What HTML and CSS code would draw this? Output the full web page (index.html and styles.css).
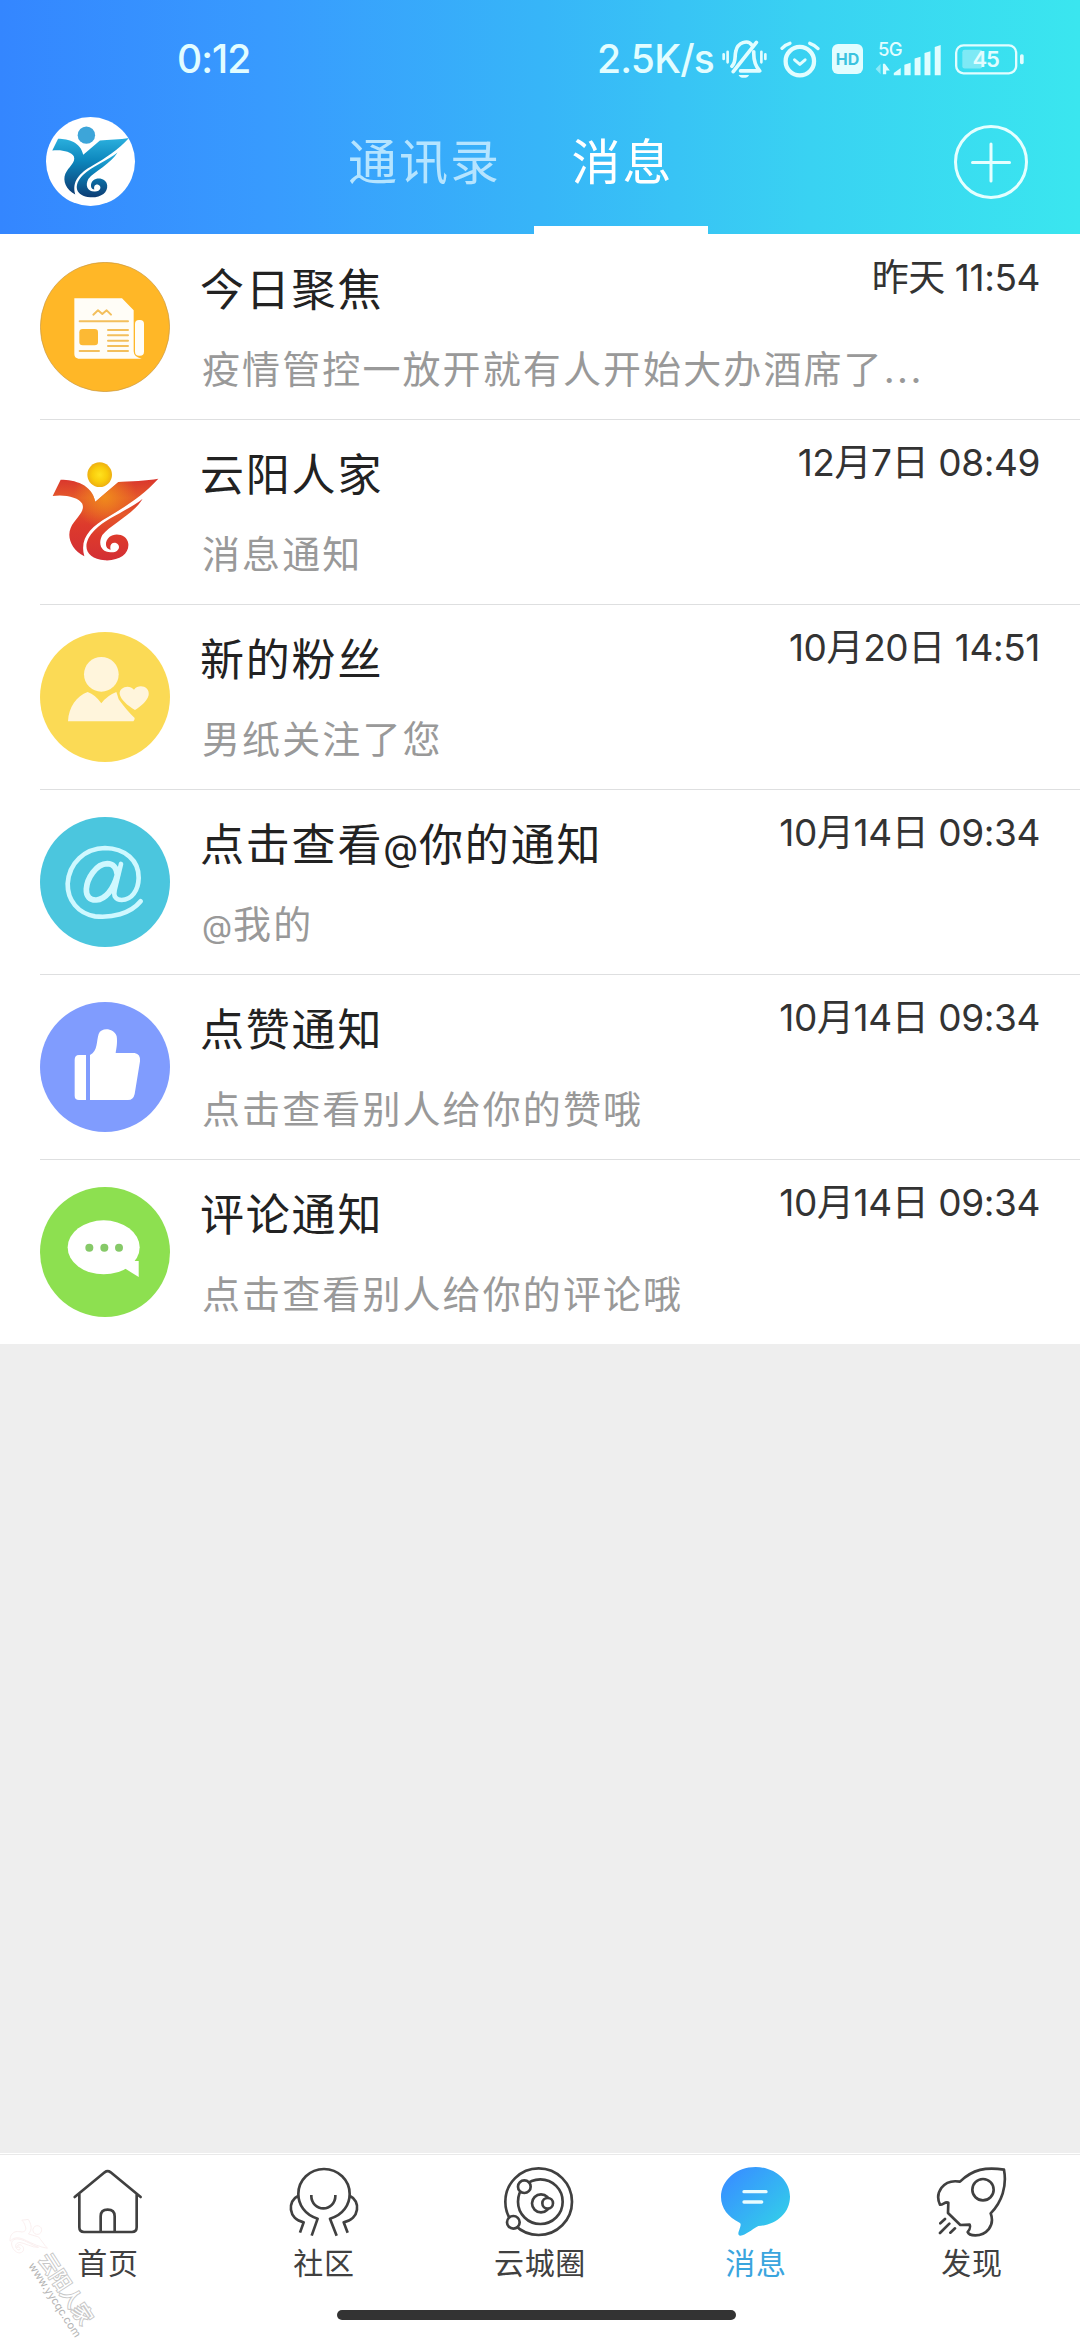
FILE: index.html
```html
<!DOCTYPE html>
<html lang="zh-CN">
<head>
<meta charset="utf-8">
<title>消息</title>
<link rel="stylesheet" href="styles.css">
</head>
<body>
<svg class="defs" width="0" height="0" aria-hidden="true">
  <defs>
    <linearGradient id="blue" x1="0" y1="0" x2="0" y2="1"><stop offset="0" stop-color="#2bb0de"/><stop offset=".4" stop-color="#0d87bd"/><stop offset="1" stop-color="#0d3c73"/></linearGradient>
    <linearGradient id="red" x1="0" y1="0" x2="0" y2="1"><stop offset="0" stop-color="#d9352d"/><stop offset=".25" stop-color="#e5592a"/><stop offset=".6" stop-color="#dd3a2c"/><stop offset="1" stop-color="#d32f35"/></linearGradient>
    <radialGradient id="sun"><stop offset="0" stop-color="#ffe21f"/><stop offset=".6" stop-color="#f9cc0c"/><stop offset="1" stop-color="#eeb012"/></radialGradient>
    <radialGradient id="warm" gradientUnits="userSpaceOnUse" cx="195" cy="150" r="95"><stop offset="0" stop-color="#f08a1c"/><stop offset="1" stop-color="#f08a1c" stop-opacity="0"/></radialGradient>
    <linearGradient id="chat" x1="0" y1="0" x2="1" y2="1"><stop offset=".15" stop-color="#3794ff"/><stop offset=".85" stop-color="#33ccea"/></linearGradient>
    <path id="wing" d="M62 98C105 98 155 112 166 164L235 105C270 103 320 101 355 95C312 143 255 180 205 209C150 240 118 275 133 328C95 309 80 272 92 243C104 214 137 196 127 170C117 150 70 141 38 147Z"/>
    <path id="curl" d="M308 155C270 187 200 213 165 248C121 292 135 335 195 340C240 342 268 320 265 290C262 262 225 255 208 270C192 284 196 308 212 308C208 295 215 285 228 288C244 294 238 316 215 316C185 318 172 292 187 264C212 233 280 202 308 155Z"/>
  </defs>
</svg>

<div class="screen">
  <header class="top">
    <div class="status">
      <span class="clock">0:12</span>
      <div class="status-right">
        <span class="speed">2.5K/s</span>
        <svg class="s-bell" viewBox="62 30 136 120" fill="none" stroke="#e2fdff" stroke-width="11" stroke-linecap="round">
          <path d="M92 112C106 98 99 82 104 66C109 40 140 30 152 48M96 128L166 40M158 68C157 92 160 108 176 126H118" stroke-linejoin="round"/>
          <path d="M67 76V90M79 68V100M181 68V100M193 76V90" stroke-width="8"/>
          <path d="M112 138A17 13 0 0 0 144 138Z" fill="#e2fdff" stroke="none"/>
        </svg>
        <svg class="s-alarm" viewBox="238 30 121 112" fill="none" stroke="#e2fdff" stroke-linecap="round" stroke-linejoin="round">
          <circle cx="298" cy="91" r="43" stroke-width="13"/>
          <path d="M282 87L298 101L314 87" stroke-width="9"/>
          <path d="M244 52Q254 41 268 37M328 37Q343 42 353 53" stroke-width="10"/>
        </svg>
        <span class="hd">HD</span>
        <svg class="s-signal" viewBox="522 28 204 109">
          <text x="533" y="75" class="sig-text">5G</text>
          <g fill="#dffdff">
            <path d="M541 100V132L526 116Z" opacity=".5"/><path d="M548 132V100H554L569 120H558V132Z"/>
            <path d="M581 135V128L602 113V135ZM613 135V103L632 97V135ZM644 135V84L662 79V135ZM674 135V67L692 62V135ZM705 135V49L723 43V135Z"/>
          </g>
        </svg>
        <svg class="s-battery" viewBox="765 42 207 92">
          <rect x="787" y="59" width="60" height="56" rx="7" fill="#fff" opacity=".35"/>
          <rect x="768.500" y="45.500" width="180" height="84" rx="22" fill="none" stroke="#e2fdff" stroke-width="7"/>
          <rect x="960" y="72" width="11" height="30" rx="5" fill="#e2fdff"/>
          <text x="857" y="110" text-anchor="middle" class="bat-text">45</text>
        </svg>
      </div>
    </div>
    <div class="bar">
      <div class="avatar">
        <svg viewBox="12 8 368 368"><circle cx="179" cy="83" r="36" fill="#3da5d9"/><use href="#wing" fill="url(#blue)"/><use href="#curl" fill="url(#blue)"/></svg>
      </div>
      <nav class="tabs">
        <a class="tab">通讯录</a>
        <a class="tab tab-on">消息</a>
      </nav>
      <svg class="plus" viewBox="0 0 74 74" fill="none" stroke="#e4ffff"><circle cx="37" cy="37" r="35.500" stroke-width="3"/><path d="M18.500 37.500H55.500M37 19V56" stroke-width="3" stroke-linecap="round"/></svg>
    </div>
  </header>

  <main class="list">
    <section class="row">
      <svg class="icon" viewBox="0 0 390 390">
        <circle cx="195" cy="195" r="194" fill="#ffb727" stroke="#c79845" stroke-width="2"/>
        <path d="M103 109H246L281 145V268Q281 285 305 290H115Q103 288 103 276Z" fill="#fffdf7"/>
        <rect x="285" y="174" width="27" height="107" rx="12" fill="#fffdf7"/>
        <g fill="none" stroke="#f3bf5c" stroke-width="6" stroke-linecap="round" stroke-linejoin="round">
          <path d="M160 158L174 145L187 156L200 145L213 158M119 178H264M204 204H264M204 220H264M204 236H264M204 252H264M204 267H264M119 267H177"/>
        </g>
        <rect x="118" y="201" width="56" height="49" rx="10" fill="#fcb934"/>
      </svg>
      <div class="body">
        <div class="line"><h2 class="title">今日聚焦</h2><time class="time">昨天 11:54</time></div>
        <p class="sub">疫情管控一放开就有人开始大办酒席了<span class="dots">...</span></p>
      </div>
    </section>
    <section class="row">
      <svg class="icon" viewBox="0 0 390 390"><circle cx="179" cy="83" r="37" fill="url(#sun)"/><use href="#wing" fill="url(#red)"/><use href="#wing" fill="url(#warm)"/><use href="#curl" fill="url(#red)"/></svg>
      <div class="body">
        <div class="line"><h2 class="title">云阳人家</h2><time class="time">12月7日 08:49</time></div>
        <p class="sub">消息通知</p>
      </div>
    </section>
    <section class="row">
      <svg class="icon" viewBox="0 0 390 390">
        <circle cx="195" cy="195" r="195" fill="#fbda55"/>
        <g fill="#fff5dc">
          <circle cx="184" cy="127" r="52"/>
          <path d="M84 268C86 225 110 192 143 180Q166 188 184 214Q202 190 229 180Q232 188 236 202Q262 238 284 258Q284 266 280 268Z"/>
          <path d="M285 234C262 220 242 203 239 186C237 165 268 156 282 173C297 154 330 164 326 189C322 207 304 222 285 234Z"/>
        </g>
      </svg>
      <div class="body">
        <div class="line"><h2 class="title">新的粉丝</h2><time class="time">10月20日 14:51</time></div>
        <p class="sub">男纸关注了您</p>
      </div>
    </section>
    <section class="row">
      <svg class="icon" viewBox="0 0 390 390">
        <circle cx="195" cy="195" r="195" fill="#4bc6de"/>
        <g fill="none" stroke="#cff8ff" stroke-linecap="round" stroke-linejoin="round">
          <path d="M302 253C270 292 214 303 165 298C114 289 82 250 83 200C87 137 135 94 195 93C255 94 297 130 296 183C295 221 275 248 245 249C226 249 220 236 224 219L243 141" stroke-width="14"/>
          <path d="M232 174C230 151 218 140 202 140C168 141 141 184 139 216C138 239 150 250 169 249C196 247 221 217 232 174Z" stroke-width="17"/>
        </g>
      </svg>
      <div class="body">
        <div class="line"><h2 class="title">点击查看<span class="at">@</span>你的通知</h2><time class="time">10月14日 09:34</time></div>
        <p class="sub"><span class="at">@</span>我的</p>
      </div>
    </section>
    <section class="row">
      <svg class="icon" viewBox="0 0 390 390">
        <circle cx="195" cy="195" r="195" fill="#809cfe"/>
        <path d="M117 159H138V294H117Q104 294 104 281V174Q104 159 117 159ZM150 159C174 148 169 116 176 96C184 75 222 78 230 103C233 122 229 141 227 153H284Q302 156 300 178L284 276Q280 294 264 294H150Z" fill="#fff"/>
      </svg>
      <div class="body">
        <div class="line"><h2 class="title">点赞通知</h2><time class="time">10月14日 09:34</time></div>
        <p class="sub">点击查看别人给你的赞哦</p>
      </div>
    </section>
    <section class="row">
      <svg class="icon" viewBox="0 0 390 390">
        <circle cx="195" cy="195" r="195" fill="#8de050"/>
        <ellipse cx="191" cy="181" rx="108" ry="81" fill="#fff"/>
        <path d="M254 244L296 270V222H278Z" fill="#fff"/>
        <g fill="#86c968"><circle cx="148" cy="182" r="12"/><circle cx="193" cy="182" r="12"/><circle cx="237" cy="182" r="12"/></g>
      </svg>
      <div class="body">
        <div class="line"><h2 class="title">评论通知</h2><time class="time">10月14日 09:34</time></div>
        <p class="sub">点击查看别人给你的评论哦</p>
      </div>
    </section>
  </main>

  <footer class="bottom">
    <nav class="nav">
      <a class="item">
        <svg class="nav-icon" viewBox="0 0 216 216"><path d="M22 84V184Q22 198 36 198H180Q194 198 194 184V84M8 93L98 19Q107 12 116 19L206 93M86 198V151Q86 131 107 131Q128 131 128 151V198"/></svg>
        <span>首页</span>
      </a>
      <a class="item">
        <svg class="nav-icon" viewBox="0 0 216 216"><path d="M71 209L89 158C50 147 31 115 31 84A77 75 0 0 1 185 84C185 115 166 147 126 158L146 209M70 87V91A36 36 0 0 0 142 91V87M30 90C-2 104 0 160 47 169L36 200M186 90C218 104 216 160 167 169L179 200" stroke-linecap="butt"/></svg>
        <span>社区</span>
      </a>
      <a class="item">
        <svg class="nav-icon" viewBox="0 0 216 216"><circle cx="104" cy="107" r="100"/><circle cx="109" cy="107" r="67"/><circle cx="111" cy="112" r="27"/><g fill="#fff"><circle cx="131" cy="112" r="16"/><circle cx="61" cy="62" r="19"/><circle cx="28" cy="169" r="19"/></g></svg>
        <span>云城圈</span>
      </a>
      <a class="item item-on">
        <svg class="nav-icon" viewBox="0 0 216 216"><path d="M107 3C164 3 210 43 210 92C210 142 166 178 115 180C93 192 78 207 61 209C52 207 55 199 58 191C61 183 64 175 60 171C24 153 3 126 3 93C3 43 49 3 107 3Z" fill="url(#chat)" stroke="none"/><path d="M72 77H138M72 108H125" stroke="#e9fcff" stroke-width="10"/></svg>
        <span>消息</span>
      </a>
      <a class="item">
        <svg class="nav-icon" viewBox="0 0 216 216"><path d="M72 47C110 10 150 2 204 11C213 60 198 108 164 142C178 180 150 208 118 208C106 208 97 204 95 198C103 188 104 184 101 176L73 177L36 141L37 110C28 105 20 118 12 116C-4 82 20 38 72 47ZM27 159L13 172M40 173L12 201M57 187L43 200"/><circle cx="141" cy="71" r="32"/></svg>
        <span>发现</span>
      </a>
    </nav>
    <div class="home-bar"></div>
    <div class="mark">
      <svg class="mark-logo" viewBox="0 0 390 390" fill="none" stroke="#f9eeee" stroke-width="7"><circle cx="179" cy="83" r="37"/><use href="#wing"/><use href="#curl"/></svg>
      <div class="mark-text"><span class="mark-name">云阳人家</span><span class="mark-url">www.yycqc.com</span></div>
    </div>
  </footer>
</div>
</body>
</html>
```

FILE: styles.css
```css
* { box-sizing: border-box; }

body {
  margin: 0;
  background: #eee;
  font-family: Inter, "Noto Sans CJK SC", sans-serif;
}

h2, p { margin: 0; font-weight: 400; }

.defs { position: absolute; }

.screen {
  display: flex;
  flex-direction: column;
  width: 1080px;
  height: 2340px;
  overflow: hidden;
  background: #eee;
}

/* header */
.top {
  display: flex;
  flex-direction: column;
  height: 234px;
  background: linear-gradient(90deg, #3486ff 0%, #389bfe 25%, #37b5f8 50%, #39d2f2 75%, #3ae6ef 100%);
}

.status {
  display: flex;
  justify-content: space-between;
  align-items: center;
  height: 90px;
  padding: 28px 56px 0 177px;
  color: #e2fdff;
}

.clock, .speed { font-size: 39px; font-weight: 500; line-height: 62px; }
.clock { letter-spacing: -1px; }
.speed { letter-spacing: -0.8px; }
.status-right { display: flex; align-items: center; }
.s-bell { width: 45px; height: 40px; margin-left: 8px; }
.s-alarm { width: 40px; height: 37px; margin-left: 13px; }

.hd {
  width: 31px;
  height: 30px;
  margin-left: 12px;
  border-radius: 6px;
  background: #e2fdff;
  color: #3bc3df;
  font-size: 16px;
  font-weight: 700;
  line-height: 30px;
  text-align: center;
}

.s-signal { width: 68px; height: 36px; margin-left: 11px; margin-bottom: 3px; overflow: visible; }
.s-battery { width: 69px; height: 31px; margin-left: 13px; }
.sig-text { fill: #e2fdff; font-size: 56px; font-weight: 500; letter-spacing: -2px; }
.bat-text { fill: #e2fdff; font-size: 66px; font-weight: 600; letter-spacing: -3px; }

.bar {
  display: flex;
  height: 144px;
  padding: 0 52px 0 46px;
}

.avatar {
  width: 89px;
  height: 89px;
  margin-top: 27px;
  border-radius: 50%;
  background: #fff;
  overflow: hidden;
}

.avatar svg { display: block; width: 89px; height: 89px; }

.tabs { display: flex; margin-left: 177px; }

.tab {
  width: 222px;
  height: 144px;
  padding: 3px 0 0 3px;
  color: #b5e4ff;
  font-size: 49px;
  letter-spacing: 2px;
  line-height: 140px;
  text-align: center;
  border-bottom: 8px solid transparent;
}

.tab-on { width: 174px; color: #fff; border-color: #fff; }
.plus { width: 74px; height: 74px; margin: 35px 0 0 auto; }

/* conversation list */
.list { background: #fff; }

.row {
  display: flex;
  gap: 30px;
  height: 185px;
  margin-left: 40px;
  padding: 28px 40px 0 0;
}

.row + .row { border-top: 1px solid #dedfe0; padding-top: 27px; }
.icon { flex: none; width: 130px; height: 130px; }
.body { flex: 1; padding-top: 2px; }
.line { display: flex; justify-content: space-between; height: 80px; }

.title {
  color: #222;
  font-size: 44px;
  letter-spacing: 1.8px;
  line-height: 52px;
}

.time {
  color: #333;
  font-size: 37px;
  letter-spacing: -0.4px;
  line-height: 27px;
}

.sub {
  padding-left: 2px;
  color: #999;
  font-size: 38px;
  letter-spacing: 2.1px;
  line-height: 50px;
}

.dots { letter-spacing: 2.4px; }
.at { font-size: 0.82em; letter-spacing: 1px; }

/* bottom navigation */
.bottom {
  position: relative;
  height: 187px;
  margin-top: auto;
  background: linear-gradient(#fff 1px, #e9e9e9 1px, #e9e9e9 2px, #fff 2px);
}

.nav { display: grid; grid-template-columns: repeat(5, 1fr); padding-top: 13px; }

.item {
  display: flex;
  flex-direction: column;
  align-items: center;
  color: #404040;
  font-size: 30px;
  letter-spacing: 0.7px;
  line-height: 50px;
}

.item-on { color: #3aa5de; }

.nav-icon {
  width: 72px;
  height: 72px;
  fill: none;
  stroke: #404040;
  stroke-width: 8;
  stroke-linecap: round;
  stroke-linejoin: round;
}

.home-bar {
  width: 399px;
  height: 10px;
  margin: 22px 0 0 337px;
  border-radius: 5px;
  background: #333;
}

/* tilted site mark laid over the corner of the navigation */
.mark {
  position: absolute;
  left: 34px;
  top: 54px;
  display: flex;
  align-items: center;
  transform: rotate(57deg);
  transform-origin: 0 0;
}

.mark-logo { width: 46px; height: 46px; }
.mark-text { display: flex; flex-direction: column; }

.mark-name {
  color: #fff;
  font-size: 20px;
  line-height: 20px;
  -webkit-text-stroke: 2px #c8c8c8;
  paint-order: stroke fill;
}

.mark-url { color: #b4b4b4; font-size: 11px; line-height: 11px; }
```
